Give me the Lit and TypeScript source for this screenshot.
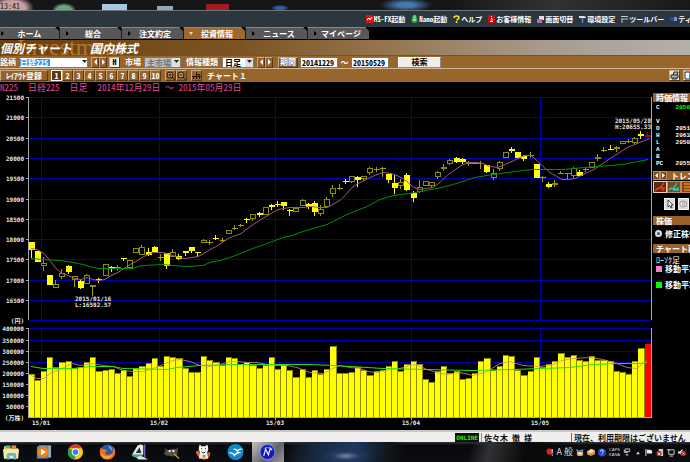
import { LitElement, html, svg, css } from 'lit';
import { customElement } from 'lit/decorators.js';
import { classMap } from 'lit/directives/class-map.js';

// all chart data is in thirds of a pixel
// high, body top, body bottom, low, filled
const CANDLES: number[][] = [
  [457, 457, 479, 507, 1], [484, 484, 515, 515, 1], [502, 520, 528, 543, 0], [555, 555, 584, 584, 1],
  [571, 583, 593, 593, 0], [538, 548, 561, 567, 0], [524, 528, 545, 551, 1], [557, 557, 571, 590, 0],
  [566, 573, 594, 597, 1], [551, 556, 583, 583, 0], [586, 586, 592, 618, 0], [563, 567, 570, 580, 1],
  [523, 523, 559, 559, 0], [528, 531, 534, 545, 1], [524, 530, 533, 540, 0], [503, 505, 508, 513, 1],
  [511, 511, 535, 535, 0], [475, 475, 490, 490, 0], [466, 472, 494, 494, 0], [475, 486, 494, 499, 1],
  [468, 472, 487, 487, 1], [492, 500, 503, 513, 0], [489, 489, 528, 536, 1], [478, 486, 501, 501, 0],
  [492, 498, 507, 510, 1], [484, 484, 490, 497, 1], [470, 472, 482, 490, 1], [487, 487, 490, 501, 1],
  [446, 450, 460, 460, 0], [450, 456, 459, 465, 0], [436, 444, 447, 450, 1], [444, 450, 453, 460, 0],
  [421, 421, 433, 433, 0], [406, 414, 417, 420, 0], [402, 406, 406, 411, 0], [384, 387, 391, 399, 1],
  [373, 373, 388, 394, 0], [366, 370, 375, 382, 1], [352, 352, 376, 376, 0], [341, 346, 350, 360, 1],
  [333, 342, 346, 352, 1], [336, 336, 348, 360, 1], [356, 360, 363, 377, 1], [350, 355, 367, 367, 0],
  [328, 331, 349, 349, 0], [338, 341, 351, 358, 1], [334, 339, 366, 378, 1], [345, 358, 373, 377, 0],
  [322, 326, 352, 352, 0], [285, 295, 311, 320, 0], [283, 295, 295, 299, 0], [266, 272, 275, 281, 1],
  [257, 259, 275, 278, 0], [257, 262, 270, 290, 1], [257, 257, 266, 274, 0], [230, 235, 250, 255, 0],
  [231, 238, 238, 247, 0], [230, 235, 235, 260, 0], [249, 251, 269, 278, 1], [254, 279, 293, 313, 1],
  [268, 277, 289, 298, 0], [250, 254, 300, 302, 1], [302, 308, 323, 335, 1], [271, 290, 307, 310, 0],
  [272, 272, 289, 289, 0], [277, 277, 289, 295, 0], [243, 247, 261, 266, 0], [222, 230, 237, 243, 0],
  [206, 211, 221, 226, 0], [201, 204, 217, 220, 1], [205, 207, 216, 222, 1], [214, 217, 221, 228, 0],
  [218, 218, 221, 221, 0], [214, 218, 218, 236, 0], [226, 226, 246, 248, 1], [238, 248, 265, 270, 0],
  [214, 216, 237, 243, 0], [187, 187, 203, 203, 0], [172, 177, 182, 190, 1], [186, 186, 203, 203, 1],
  [194, 197, 206, 214, 1], [186, 195, 195, 203, 0], [222, 222, 263, 263, 1], [258, 260, 260, 277, 0],
  [275, 281, 290, 293, 1], [270, 280, 286, 290, 0], [243, 248, 248, 252, 0], [248, 250, 250, 268, 0],
  [230, 234, 257, 265, 0], [240, 245, 257, 259, 1], [234, 236, 240, 246, 0], [217, 217, 233, 233, 0],
  [192, 200, 206, 212, 0], [170, 181, 181, 187, 0], [165, 176, 178, 180, 1], [167, 171, 178, 187, 0],
  [154, 154, 163, 163, 0], [147, 152, 152, 158, 0], [142, 145, 158, 161, 0], [124, 132, 137, 147, 1],
  [126, 134, 141, 143, 0],
];

const VOLUMES = [
  162, 180, 154, 112, 142, 127, 124, 144, 142, 125, 110, 154, 149, 146, 159, 151, 169, 144, 138, 130,
  113, 138, 107, 110, 115, 143, 157, 157, 107, 120, 127, 136, 110, 115, 131, 125, 135, 144, 134, 110,
  148, 136, 149, 170, 148, 172, 149, 161, 146, 78, 159, 160, 155, 141, 149, 166, 152, 150, 138, 122,
  152, 133, 124, 132, 177, 186, 153, 138, 160, 154, 178, 175, 160, 123, 114, 150, 138, 105, 108, 149,
  166, 152, 111, 142, 133, 122, 99, 110, 105, 120, 122, 107, 120, 119, 123, 153, 155, 163, 122, 84, 72,
];

const PRICE_SHORT = [
  94, 475, 112, 478, 131, 488, 150, 511, 168, 535, 187, 549, 205, 556, 224, 563, 242, 566, 261, 561,
  279, 567, 298, 570, 316, 566, 334, 556, 353, 547, 371, 533, 390, 522, 408, 512, 427, 501, 445, 492,
  463, 487, 482, 486, 501, 490, 519, 496, 538, 501, 556, 503, 575, 500, 593, 497, 612, 488, 630, 476,
  649, 467, 664, 459, 685, 445, 723, 430, 760, 403, 797, 377, 834, 358, 852, 354, 871, 352, 908, 351,
  930, 349, 960, 352, 982, 350, 1000, 342, 1022, 328, 1037, 313, 1056, 292, 1074, 278, 1093, 269,
  1111, 260, 1130, 251, 1148, 247, 1172, 248, 1190, 255, 1210, 264, 1225, 277, 1241, 291, 1259, 296,
  1278, 294, 1300, 290, 1320, 277, 1345, 253, 1370, 235, 1390, 222, 1410, 216, 1430, 215, 1450, 219,
  1470, 227, 1495, 230, 1515, 223, 1535, 212, 1555, 203, 1575, 196, 1592, 195, 1610, 211, 1630, 229,
  1650, 246, 1670, 259, 1685, 267, 1705, 266, 1725, 263, 1750, 252, 1775, 240, 1800, 224, 1830, 205,
  1855, 188, 1880, 172, 1905, 161, 1925, 152, 1950, 143,
];

const PRICE_LONG = [
  94, 505, 130, 507, 180, 511, 220, 515, 250, 523, 280, 530, 300, 535, 400, 535, 415, 529, 430, 524,
  490, 523, 520, 525, 560, 528, 610, 524, 630, 517, 660, 509, 690, 501, 760, 473, 825, 449, 850, 440,
  875, 436, 910, 423, 980, 401, 1040, 373, 1100, 348, 1140, 328, 1170, 319, 1200, 312, 1230, 308,
  1260, 304, 1310, 295, 1360, 281, 1425, 260, 1480, 252, 1570, 240, 1595, 238, 1690, 238, 1720, 234,
  1790, 229, 1870, 222, 1900, 216, 1945, 206,
];

const VOLUME_SHORT = [
  94, 164, 112, 174, 131, 174, 150, 160, 187, 145, 215, 130, 240, 136, 279, 129, 310, 136, 340, 138,
  370, 150, 400, 154, 430, 153, 460, 144, 490, 132, 519, 121, 540, 118, 570, 124, 600, 136, 630, 138,
  660, 133, 690, 122, 710, 122, 745, 125, 770, 125, 800, 131, 830, 134, 860, 134, 890, 142, 930, 155,
  970, 160, 1000, 144, 1020, 136, 1050, 141, 1080, 143, 1100, 154, 1130, 155, 1170, 146, 1200, 145,
  1235, 131, 1255, 134, 1280, 147, 1310, 155, 1340, 161, 1380, 157, 1420, 165, 1460, 154, 1500, 130,
  1530, 123, 1570, 134, 1620, 139, 1660, 133, 1685, 120, 1720, 113, 1770, 112, 1810, 117, 1850, 128,
  1880, 140, 1910, 143, 1940, 121,
];

const VOLUME_LONG = [
  94, 139, 130, 145, 220, 143, 270, 138, 340, 139, 370, 145, 500, 146, 530, 140, 600, 136, 700, 132,
  800, 132, 870, 131, 930, 133, 1000, 136, 1100, 141, 1150, 145, 1280, 148, 1420, 151, 1540, 146,
  1710, 141, 1780, 132, 1850, 129, 1920, 129, 1940, 126,
];

const PRICE_GRID = [22, 82, 143, 205, 265, 326, 386, 448, 508, 570, 630, 691];
const PRICE_LABELS = ['21500', '21000', '20500', '20000', '19500', '19000', '18500', '18000', '17500', '17000', '16500', '(円)'];
const VOLUME_GRID = [25, 61, 92, 127, 160, 193, 226, 258, 292];
const VOLUME_LABELS = ['400000', '350000', '300000', '250000', '200000', '150000', '100000', '50000', '(万株)'];
const MONTHS: [number, string][] = [[124, '15/01'], [476, '15/02'], [826, '15/03'], [1232, '15/04'], [1621, '15/05']];

const px = (v: number) => Math.round(v / 3);
const priceY = (v: number) => px(v) - 5;
const volumeY = (v: number) => px(v) + 225;
const barX = (i: number) => Math.round(28.6 + i * 6.16);

function points(data: number[], y: (v: number) => number) {
  const out: string[] = [];
  for (let i = 0; i < data.length; i += 2) {
    out.push(`${px(data[i])},${y(data[i + 1]) + 0.5}`);
  }
  return out.join(' ');
}

@customElement('stock-chart')
export class StockChart extends LitElement {
  static styles = css`
    :host {
      display: block;
      min-width: 0;
      background: #000;
    }
    svg {
      display: block;
      width: 100%;
    }
    .grid {
      stroke: #0000b4;
      shape-rendering: crispEdges;
    }
    .axis {
      stroke: #a8a8a8;
      shape-rendering: crispEdges;
    }
    .candles, .bars {
      shape-rendering: crispEdges;
    }
    .up { fill: none; stroke: #8c8c00; }
    .down { fill: #ffff00; stroke: #ffff00; }
    .wick { stroke: #a0a000; }
    .last { fill: none; stroke: #b00000; }
    .short { fill: none; stroke: #9c5a84; }
    .long { fill: none; stroke: #009000; }
    .volume .short { stroke: #d08c78; stroke-opacity: 0.8; }
    .volume .long { stroke: #30e000; }
    .bar-edge { fill: #8c8c00; }
    .bar { fill: #ffff00; }
    .bar-last { fill: #ff0000; }
    text {
      fill: #e8e8e8;
      font: bold 6px "DejaVu Sans Mono", "Noto Sans CJK JP", monospace;
    }
    .end { text-anchor: end; }
    .middle { text-anchor: middle; }
  `;

  candle(c: number[], i: number) {
    const [high, top, bottom, low, filled] = c;
    const x = barX(i);
    const last = i === CANDLES.length - 1;
    const kind = last ? 'last' : filled ? 'down' : 'up';
    const wick = last ? 'last' : filled ? 'down' : 'wick';
    const t = priceY(top);
    const b = priceY(bottom);
    const h = Math.max(0, b - t - 1);
    return svg`
      <line class=${wick} x1=${x + 2.5} x2=${x + 2.5} y1=${priceY(high)} y2=${t}></line>
      <line class=${wick} x1=${x + 2.5} x2=${x + 2.5} y1=${b} y2=${priceY(low)}></line>
      ${h > 0
        ? svg`<rect class=${kind} x=${x + 0.5} y=${t + 0.5} width="5" height=${h}></rect>`
        : svg`<line class=${wick} x1=${x} x2=${x + 6} y1=${t + 0.5} y2=${t + 0.5}></line>`}
    `;
  }

  bar(v: number, i: number) {
    const x = barX(i);
    const y = volumeY(v);
    const h = volumeY(292) - y;
    if (i === VOLUMES.length - 1) {
      return svg`<rect class="bar-last" x=${x} y=${y} width="6" height=${h}></rect>`;
    }
    return svg`
      <rect class="bar-edge" x=${x} y=${y} width=${barX(i + 1) - x} height=${h}></rect>
      <rect class="bar" x=${x} y=${y + 1} width=${barX(i + 1) - x - 1} height=${h - 1}></rect>
    `;
  }

  render() {
    return html`
      <svg viewBox="0 0 652 335" role="img" aria-label="日経225 日足">
        <g class="grid">
          ${PRICE_GRID.map((y) => svg`<line x1="29" x2="651" y1=${priceY(y) + 0.5} y2=${priceY(y) + 0.5}></line>`)}
          ${VOLUME_GRID.map((y) => svg`<line x1="29" x2="651" y1=${volumeY(y) + 0.5} y2=${volumeY(y) + 0.5}></line>`)}
          ${MONTHS.map(([x]) => svg`
            <line x1=${px(x) + 0.5} x2=${px(x) + 0.5} y1="2" y2="225"></line>
            <line x1=${px(x) + 0.5} x2=${px(x) + 0.5} y1="233" y2="322"></line>
          `)}
        </g>
        <g class="candles">${CANDLES.map((c, i) => this.candle(c, i))}</g>
        <polyline class="short" points=${points(PRICE_SHORT, priceY)}></polyline>
        <polyline class="long" points=${points(PRICE_LONG, priceY)}></polyline>
        <g class="bars">${VOLUMES.map((v, i) => this.bar(v, i))}</g>
        <g class="volume">
          <polyline class="short" points=${points(VOLUME_SHORT, volumeY)}></polyline>
          <polyline class="long" points=${points(VOLUME_LONG, volumeY)}></polyline>
        </g>
        <g class="axis">
          <path d="M28.5 2V225M28.5 233V323M651.5 2V225M651.5 233V323M28 322.5H652"></path>
          ${PRICE_GRID.slice(0, 11).map((y) => svg`<line x1="26" x2="29" y1=${priceY(y) + 0.5} y2=${priceY(y) + 0.5}></line>`)}
          ${VOLUME_GRID.slice(0, 8).map((y) => svg`<line x1="26" x2="29" y1=${volumeY(y) + 0.5} y2=${volumeY(y) + 0.5}></line>`)}
          ${MONTHS.map(([x]) => svg`<line x1=${px(x) + 0.5} x2=${px(x) + 0.5} y1="322" y2="325"></line>`)}
        </g>
        ${PRICE_LABELS.map((t, i) => svg`<text class="end" x="24" y=${priceY(PRICE_GRID[i]) + 3}>${t}</text>`)}
        ${VOLUME_LABELS.map((t, i) => svg`<text class="end" x="24" y=${volumeY(VOLUME_GRID[i]) + 3}>${t}</text>`)}
        ${MONTHS.map(([x, t]) => svg`<text class="middle" x=${px(x)} y="330">${t}</text>`)}
        <text x="75" y="206">2015/01/16</text>
        <text x="75" y="212">L:16592.57</text>
        <text class="end" x="651" y="28">2015/05/28</text>
        <text class="end" x="651" y="34">H:20655.33</text>
      </svg>
    `;
  }
}

@customElement('quote-panel')
export class QuotePanel extends LitElement {
  static styles = css`
    :host {
      display: block;
      overflow: hidden;
      background: #000;
      color: #fff;
      font: bold 8px/9px "Noto Sans CJK JP", sans-serif;
      font-feature-settings: "hwid";
      white-space: nowrap;
    }
    h2 {
      display: flex;
      align-items: center;
      gap: 2px;
      margin: 0;
      height: 9px;
      padding-left: 3px;
      background: #98622a;
      font-size: 8px;
    }
    table {
      margin: 2px 0 4px;
      border-collapse: collapse;
      font: bold 6px/7px "Liberation Mono", monospace;
    }
    th, td {
      height: 7px;
      padding: 0 0 0 3px;
      text-align: left;
      line-height: 6px;
      font-weight: bold;
    }
    th { width: 17px; }
    .now { color: #00ff00; }
    td.diff { color: #ff0000; padding-left: 10px; }
    button {
      flex: none;
      padding: 0;
      border: 1px solid #c08a50;
      background: #7a4a18;
      color: #fff;
    }
    .step { display: flex; width: 7px; height: 9px; align-items: center; justify-content: center; }
    .trend { padding-left: 0; gap: 0; }
    .trend span { margin-left: 4px; }
    .tools {
      display: flex;
      margin: 1px 0 5px;
    }
    .tools button { width: 14px; height: 12px; }
    .tools .on { border-color: #f0d0b0; background: #5c2a10; }
    .pointer {
      display: flex;
      gap: 3px;
      padding: 0 0 6px 11px;
    }
    .pointer button { width: 11px; height: 12px; background: #d8d8d8; border-color: #f4f4f4; }
    svg { display: block; width: 100%; height: 100%; }
    .adjust {
      display: flex;
      align-items: center;
      gap: 3px;
      padding: 4px 0 6px 2px;
    }
    input {
      appearance: none;
      flex: none;
      width: 7px;
      height: 7px;
      margin: 0;
      border: 2px solid #ddd;
      border-radius: 50%;
      background: #555;
    }
    .kind { margin: 2px 0 0 3px; font-weight: normal; }
    ul { margin: 0; padding: 0 0 0 3px; list-style: none; }
    li { display: flex; align-items: center; gap: 3px; height: 9px; margin-bottom: 7px; }
    .swatch { flex: none; width: 6px; height: 6px; }
    .pink { background: #f080c8; }
    .green { background: #00ff00; }
  `;

  render() {
    const rows = [['V', ''], ['O', '2051'], ['H', '2063'], ['L', '2050'], ['A', ''], ['B', ''], ['PC', '2055']];
    return html`
      <h2>時価情報</h2>
      <table>
        <tr><th>C</th><td class="now">2056</td></tr>
        <tr><th></th><td class="diff">↑</td></tr>
        ${rows.map(([k, v]) => html`<tr><th>${k}</th><td>${v}</td></tr>`)}
      </table>
      <h2 class="trend">
        <button class="step" aria-label="前へ"><svg viewBox="0 0 5 7"><path d="M4 1v5L1 3.5z" fill="#fff"/></svg></button>
        <button class="step" aria-label="次へ"><svg viewBox="0 0 5 7"><path d="M1 1v5l3-2.500z" fill="#fff"/></svg></button>
        <span>トレンド</span>
      </h2>
      <div class="tools">
        <button class="on" aria-label="トレンドライン">
          <svg viewBox="0 0 12 10"><path d="M1 9l3-3 1 1 5-6M7 6h4M9 6v3" stroke="#f04020" stroke-width="1.300" fill="none"/></svg>
        </button>
        <button aria-label="平均線">
          <svg viewBox="0 0 12 10"><path d="M1 8l2-2 2 1 4-6M6 9V6l2 2 2-2v3" stroke="#20d8d8" stroke-width="1.300" fill="none"/></svg>
        </button>
        <button aria-label="横線">
          <svg viewBox="0 0 12 10"><path d="M2 2h9M2 5h9M2 8h9" stroke="#f08020" stroke-width="1.500"/></svg>
        </button>
      </div>
      <div class="pointer">
        <button aria-label="選択"><svg viewBox="0 0 9 10"><path d="M3 1v7l1.500-1.500L6 9l1-.5-1-2.500h2z" fill="#fff" stroke="#222" stroke-width=".8"/></svg></button>
        <button aria-label="消去"><svg viewBox="0 0 9 10"><path d="M1 3l4-1 3 2-1 3-4 1-2-2zM3 4h4M3 6h3" fill="#eee" stroke="#999"/></svg></button>
      </div>
      <h2>株価</h2>
      <label class="adjust"><input type="radio" checked>修正株価</label>
      <h2>チャート種</h2>
      <p class="kind">ﾛｰｿｸ足</p>
      <ul>
        <li><i class="swatch pink"></i>移動平均</li>
        <li><i class="swatch green"></i>移動平均</li>
      </ul>
    `;
  }
}

@customElement('task-bar')
export class TaskBar extends LitElement {
  static styles = css`
    :host {
      display: flex;
      align-items: center;
      height: 20px;
      overflow: hidden;
      color: #ddd;
      font: 9px/12px "Noto Sans CJK JP", sans-serif;
      background:
        radial-gradient(ellipse 26px 8px at 346px 14px, #7088a8 0, #24385c 50%, transparent 100%),
        linear-gradient(100deg, transparent 282px, #18283c 310px, #1c3860 350px, #101418 385px, transparent 400px),
        linear-gradient(105deg, transparent 455px, #303234 475px, #08090a 510px, transparent 560px),
        linear-gradient(#33383c, #08090b 3px, #0c0d10);
    }
    .apps { display: flex; }
    .apps button {
      width: 32px;
      height: 20px;
      padding: 1px 8px 1px 7px;
      border: 0;
      background: none;
    }
    .apps button:first-child { width: 28px; padding: 1px 8px 1px 3px; }
    .apps .active { background: linear-gradient(135deg, #c0c0c0, #606468 60%, #98999c); }
    svg { display: block; height: 18px; width: 17px; overflow: visible; }
    .tray {
      display: flex;
      align-items: center;
      gap: 3px;
      margin-left: auto;
      padding-right: 4px;
    }
    .tray svg { width: 8px; height: 9px; }
    .caps { font: 4px/5px "Liberation Sans", sans-serif; }
    .ime { font-size: 9px; }
  `;

  render() {
    return html`
      <div class="apps">
        <button aria-label="エクスプローラー"><svg viewBox="0 0 18 18">
          <path d="M1 3h6l1 2h8v11H1z" fill="#e8c868"/><path d="M3 2h5v3H3z" fill="#60b860"/><path d="M9 2h5v3H9z" fill="#e88050"/>
          <path d="M0 6h17l-1 10H1z" fill="#f8e8a8"/><path d="M4 17v-5q0-2 2-2h6q2 0 2 2v5h-3v-4H7v4z" fill="#58b8e0"/>
        </svg></button>
        <button aria-label="メディアプレーヤー"><svg viewBox="0 0 18 18">
          <rect x="4" y="2" width="13" height="13" fill="#88b0cc"/><rect x="2" y="3" width="12" height="13" fill="#508cb8"/>
          <circle cx="8.500" cy="9" r="6" fill="#f08018"/><path d="M6.500 5.500v7l5-3.500z" fill="#fff"/>
        </svg></button>
        <button aria-label="Chrome"><svg viewBox="0 0 18 18">
          <circle cx="9" cy="9" r="8" fill="#f4c820"/><path d="M9 9L2 5a8 8 0 0 0 6 12z" fill="#28a048"/>
          <path d="M2 5a8 8 0 0 1 14 0H9z" fill="#e03828"/>
          <circle cx="9" cy="9" r="4" fill="#fff"/><circle cx="9" cy="9" r="3" fill="#3880e0"/>
        </svg></button>
        <button aria-label="Firefox"><svg viewBox="0 0 18 18">
          <circle cx="9" cy="9" r="8" fill="#2058b0"/><path d="M10 2q5 1 4 7-1-3-3-4z" fill="#60a8e8"/>
          <path d="M2 4q1 2 4 2l3 2-3 2q3 4 8 0 2-3 0-7 4 3 3 8-2 6-8 6T1 11Q0 7 2 4z" fill="#f07018"/>
          <path d="M2 10q5 6 12 2-3 5-8 4-3-1-4-6z" fill="#f8a828"/>
        </svg></button>
        <button aria-label="ペイント"><svg viewBox="0 0 18 18">
          <path d="M1 12L7 2q4-2 6 0v10z" fill="#e8ecec"/><path d="M5 10l4-6 2 6z" fill="#203030"/><path d="M0 12h13l-3 4q-6 0-10-4z" fill="#48a8a8"/>
          <path d="M14.500 1v14" stroke="#7860b0" stroke-width="1.500"/><path d="M6 15q4-4 10 1l2 1H8z" fill="#d8e8e8"/>
        </svg></button>
        <button aria-label="GIMP"><svg viewBox="0 0 18 18">
          <path d="M1 5l5 2q4-2 8-1l2-2-1 8q-4 3-8 1-5 0-6-3l2-2z" fill="#585044"/>
          <circle cx="7" cy="8" r="1.200" fill="#fff"/><circle cx="11" cy="8" r="1.200" fill="#fff"/><path d="M12 11l5 5" stroke="#c88848" stroke-width="1.500"/>
        </svg></button>
        <button aria-label="キャラクター"><svg viewBox="0 0 18 18">
          <path d="M1 10q0-3 3-2l1 6 9 1 0-6q3 0 2 3-1 5-6 5t-9-7z" fill="#e87020"/>
          <path d="M5 1l2 2h4l2-2q2 5 0 8l1 7H4l1-7Q3 6 5 1z" fill="#f4f2ee"/>
          <path d="M7 5v1M11 5v1M7 9q2 2 4 0" stroke="#222" fill="none"/><path d="M8 12h3v3H8z" fill="#a09080"/>
        </svg></button>
        <button aria-label="OpenOffice"><svg viewBox="0 0 18 18">
          <circle cx="9" cy="9" r="8.500" fill="#1088d0"/>
          <path d="M6 6q3-2 5 1 3-3 6-1-4 0-6 3-2-3-5-3zM1 10q4-2 7 1 4-4 7-1-5 0-7 4-2-4-7-4z" fill="#fff"/>
        </svg></button>
        <button class="active" aria-label="マーケット"><svg viewBox="0 0 18 18">
          <circle cx="9" cy="9" r="8" fill="#1418b8" stroke="#9098e0"/><path d="M4 6q5-5 10 0-5-2-10 0z" fill="#6078f0"/>
          <path d="M5 13l2-7 3 6 2-7 2 2" fill="none" stroke="#e8e8ff" stroke-width="1.300"/>
        </svg></button>
      </div>
      <div class="tray">
        <svg viewBox="0 0 9 10"><circle cx="4" cy="4" r="3.500" fill="#e02018"/><path d="M7 1v5M7 7v2" stroke="#eee"/></svg>
        <span class="ime">A 般</span>
        <svg viewBox="0 0 9 10"><path d="M1 4h7v4q-3 2-7 0z" fill="#e8a860"/><path d="M0 1l4 2 4-2v3H1z" fill="#58a0e8"/><path d="M3 5h3v2H3z" fill="#fff"/></svg>
        <svg viewBox="0 0 9 10"><path d="M0 4l5-3 4 2v4L4 9 0 7z" fill="#d89848"/><path d="M0 4l5-3 4 2-5 3z" fill="#f8d8a0"/></svg>
        <svg viewBox="0 0 9 10"><circle cx="4.500" cy="5" r="4.500" fill="#2040d0"/><path d="M3 4q0-2 1.500-2T6 4q0 1-1.500 2M4.500 7v1" stroke="#fff" fill="none"/></svg>
        <span class="caps">CAPS<br>KANA</span>
        <svg viewBox="0 0 8 10"><path d="M2 1h5v3H2zM1 2v3h4" fill="none" stroke="#ccc"/><path d="M2 7h4L4 9z" fill="#ccc"/></svg>
        <svg viewBox="0 0 8 10"><path d="M2 7l2-3 2 3z" fill="#ddd"/></svg>
        <svg viewBox="0 0 9 10"><path d="M1 1v8" stroke="#eee"/><path d="M2 2h4l2 1v3H2z" fill="#eee"/></svg>
        <svg viewBox="0 0 9 10"><path d="M3 1h5v8H3z" fill="#ccc"/><circle cx="3.500" cy="6" r="3" fill="#d82018"/><path d="M2 5l3 3M5 5L2 8" stroke="#fff"/></svg>
        <svg viewBox="0 0 9 10"><path d="M2 2h6v5H2zM3 9h4M0 2h3" fill="none" stroke="#ddd"/></svg>
        <svg viewBox="0 0 9 10"><path d="M0 4h2l3-3v8L2 6H0z" fill="#eee"/><circle cx="6" cy="6" r="3" fill="#e02018"/><path d="M5 5l2 2" stroke="#fff"/></svg>
      </div>
    `;
  }
}

@customElement('app-root')
export class AppRoot extends LitElement {
  static styles = css`
    :host {
      display: flex;
      flex-direction: column;
      min-height: 100vh;
      overflow: hidden;
      background: #000;
      color: #fff;
      font: bold 8px/12px "Noto Sans CJK JP", sans-serif;
      font-feature-settings: "hwid";
      white-space: nowrap;
    }
    button, input, select {
      box-sizing: border-box;
      flex: none;
      margin: 0;
      padding: 0;
      font: inherit;
      font-feature-settings: inherit;
    }
    a { color: inherit; text-decoration: none; }
    .desktop {
      height: 10px;
      color: #222;
      line-height: 11px;
      font-weight: normal;
      background:
        radial-gradient(ellipse 22px 12px at 12px 8px, #c8a0a0 60%, transparent),
        radial-gradient(ellipse 12px 7px at 64px 10px, #68a880 60%, transparent),
        linear-gradient(#a8c8dc, #a8c8dc) 102px 4px / 25px 6px no-repeat,
        linear-gradient(#90a8b8, #90a8b8) 157px 6px / 16px 4px no-repeat,
        linear-gradient(#a01c20, #a01c20) 206px 4px / 23px 6px no-repeat,
        radial-gradient(ellipse 9px 3px at 280px 8px, #3060a0 50%, transparent),
        radial-gradient(ellipse 26px 7px at 406px 5px, #4878b0 30%, transparent),
        linear-gradient(110deg, #141618 65%, #303236 80%, #16181a);
    }
    .menu {
      display: flex;
      align-items: center;
      gap: 6px;
      height: 17px;
      box-sizing: border-box;
      padding-left: 53%;
      border-top: 1px solid #707478;
      background: #2c363f;
      font-size: 7px;
    }
    .menu a { display: flex; align-items: center; gap: 1px; flex: none; }
    .menu svg { width: 7px; height: 8px; }
    .tabs { display: flex; height: 12px; margin-bottom: 1px; }
    .tab {
      box-sizing: border-box;
      display: flex;
      align-items: center;
      flex: none;
      width: 62px;
      padding-left: 5px;
      border-left: 1px solid #181818;
      border-top: 1px solid #888;
      background: #585858;
      line-height: 10px;
      clip-path: polygon(0 0, 58px 0, 100% 4px, 100% 100%, 0 100%);
    }
    .tab:first-child { width: 59px; padding-left: 0; border-left: 0; clip-path: polygon(0 0, 55px 0, 100% 4px, 100% 100%, 0 100%); }
    .tab span { flex: 1; padding-right: 4px; text-align: center; }
    .tab svg { width: 4px; height: 5px; }
    .tab.active { background: #a0682c; }
    .title {
      display: grid;
      align-items: center;
      height: 15px;
      overflow: hidden;
      background: linear-gradient(90deg, #6c400c, #7c5424 35%, #94744c 55%, #a89c90 80%, #b4b0ac);
    }
    .title > * { grid-area: 1 / 1; margin: 0; }
    .mark { padding-left: 17px; color: #b07830; font: 24px/13px "Liberation Serif", serif; }
    h1 { display: flex; gap: 18px; font-size: 12px; line-height: 15px; font-style: italic; }
    .bar {
      display: flex;
      align-items: center;
      height: 13px;
      background: #98652a;
    }
    .search { border-bottom: 1px solid #d0b898; border-top: 1px solid #80501c; height: 14px; box-sizing: border-box; }
    .field, .pick {
      height: 11px;
      border: 1px solid #777;
      border-radius: 0;
      background-color: #fff;
      color: #000;
      line-height: 9px;
    }
    .combo { display: flex; width: 69px; margin: 0 3px 0 3px; }
    .combo input {
      width: 62px;
      border-right: 0;
      color: #fff;
      background: linear-gradient(#3898f0, #3898f0) 0 1px / 30px 7px no-repeat #fff;
    }
    .combo button {
      width: 7px;
      height: 11px;
      border: 1px solid #777;
      border-left: 0;
      background: #fff;
    }
    .pick {
      appearance: none;
      padding-left: 2px;
      background: linear-gradient(#e0e0e0, #e0e0e0) right / 8px 9px no-repeat #fff;
    }
    .pick-box { display: grid; align-items: center; flex: none; }
    .pick-box > * { grid-area: 1 / 1; }
    .pick-box svg { justify-self: end; width: 5px; height: 4px; margin-right: 2px; pointer-events: none; }
    .market { width: 37px; margin: 0 5px 0 3px; }
    .market .pick { background-color: #c0c0c0; color: #777; opacity: 1; }
    .feet { width: 32px; margin: 0 3px 0 4px; }
    .date { width: 38px; padding: 0 1px; }
    .raised {
      height: 11px;
      border: 1px solid;
      border-color: #d0a878 #5c3810 #5c3810 #d0a878;
      background: #94622a;
      color: #fff;
      line-height: 8px;
    }
    .arrow { width: 8px; }
    .arrow svg, .combo svg { display: block; margin: 0 auto; width: 5px; height: 6px; }
    .key { width: 11px; margin: 0 5px 0 2px; background: #f0eeea; color: #000; }
    .period { width: 20px; margin: 0 2px 0 5px; background: #80501c; }
    .tilde { width: 13px; text-align: center; }
    .tilde, .wide { font-feature-settings: normal; }
    .go { width: 43px; margin-left: 9px; background: #f0eeea; color: #000; border-color: #fff #888 #888 #fff; }
    .save { width: 48px; margin-right: 3px; }
    .number { width: 11px; }
    .number.on { background: #5c3810; border-color: #fff; }
    .lens { width: 11px; }
    .zoom { margin-left: 4px; }
    .lens svg { display: block; width: 9px; height: 9px; }
    .name { margin-left: 5px; }
    .right { display: flex; gap: 3px; margin-left: auto; overflow: hidden; width: 21px; }
    .right .raised { background: #f0eeea; }
    h2 {
      display: flex;
      gap: 10px;
      margin: 0;
      height: 13px;
      color: #e04898;
      font-size: 9px;
      line-height: 12px;
      font-weight: normal;
    }
    main {
      display: grid;
      grid-template-columns: minmax(0, 1fr) 37px;
      column-gap: 1px;
      flex: 1;
    }
    quote-panel { margin-top: -2px; }
    .status {
      display: flex;
      align-items: center;
      height: 12px;
      box-sizing: border-box;
      border-top: 2px solid #c8c8c8;
      background: #f0eeec;
      color: #111;
      line-height: 9px;
    }
    .online {
      margin-left: auto;
      padding: 0 1px;
      background: #101010;
      color: #30f000;
      font: bold 6px/9px "DejaVu Sans Mono", monospace;
    }
    .user { box-sizing: border-box; width: 90px; margin-left: 2px; padding-left: 2px; border-left: 1px solid #888; }
    .limit { box-sizing: border-box; width: 119px; padding-left: 2px; border-left: 1px solid #666; }
  `;

  menu = [
    ['MS-FX起動', svg`<rect width="7" height="8" fill="#d81818"/><path d="M1 5l2-2 1 2 2-3" stroke="#fff" fill="none"/>`],
    ['Nano起動', svg`<ellipse cx="3.500" cy="5" rx="3" ry="3" fill="#30a850"/><circle cx="3.500" cy="2" r="2" fill="#70d088"/><path d="M2 5h3" stroke="#fff"/>`],
    ['ヘルプ', svg`<path d="M1 3q0-2 2.500-2T6 3q0 1-2.500 2M3.500 6v2" stroke="#f8e820" stroke-width="1.500" fill="none"/>`],
    ['お客様情報', svg`<rect width="7" height="8" fill="#c01010"/><path d="M3.500 1v1M3 3.500h1V6M2 6.500h3" stroke="#fff" fill="none"/>`],
    ['画面切替', svg`<rect x="2" y="1" width="5" height="4" fill="#e8d8e8"/><rect y="4" width="5" height="4" fill="#b070b0"/>`],
    ['環境設定', svg`<path d="M0 1h5l2 1v1H0z" fill="#e0e0e0"/><path d="M3.500 3v5" stroke="#5888c8" stroke-width="1.500"/>`],
    ['ツールバー', svg`<path d="M0 1.500h7M0 4h7M1 4v4" stroke="#c8c8c8" fill="none"/>`],
    ['ティッカー', svg`<path d="M0 2h7v4H0z" fill="#3840a8"/><path d="M4 3h3M4 5h3" stroke="#d0d0e0"/>`],
  ] as const;

  tabs = ['ホーム', '総合', '注文約定', '投資情報', 'ニュース', 'マイページ'];

  arrows() {
    return html`
      <button type="button" class="raised arrow" aria-label="前へ"><svg viewBox="0 0 5 6"><path d="M4 0v6L1 3z" fill="#fff"/></svg></button>
      <button type="button" class="raised arrow" aria-label="次へ"><svg viewBox="0 0 5 6"><path d="M1 0v6l3-3z" fill="#fff"/></svg></button>
    `;
  }

  render() {
    const down = html`<svg viewBox="0 0 5 4"><path d="M0 0h5L2.500 3z" fill="#222"/></svg>`;
    return html`
      <div class="desktop">13:41</div>
      <nav class="menu">
        ${this.menu.map(([text, icon]) => html`<a href="#"><svg viewBox="0 0 7 8">${icon}</svg>${text}</a>`)}
      </nav>
      <nav class="tabs">
        ${this.tabs.map((text, i) => html`
          <a href="#" class=${classMap({ tab: true, active: i === 3 })}>
            <svg viewBox="0 0 4 5">
              ${i === 3 ? svg`<path d="M0 1h4L2 4z" fill="#f0d8b0"/>` : svg`<path d="M1 0v5l3-2.500z" fill="#000"/>`}
            </svg>
            <span>${text}</span>
          </a>
        `)}
      </nav>
      <header class="title">
        <span class="mark" aria-hidden="true">Investment</span>
        <h1><span>個別チャート</span><span>国内株式</span></h1>
      </header>
      <form class="bar search" @submit=${(e: Event) => e.preventDefault()}>
        <label for="code">銘柄</label>
        <div class="combo">
          <input id="code" class="field" value="日経225">
          <button type="button" aria-label="銘柄一覧">${down}</button>
        </div>
        ${this.arrows()}
        <button type="button" class="raised key">H</button>
        <label for="market">市場</label>
        <div class="pick-box market"><select id="market" class="pick" disabled><option>主市場</option></select>${down}</div>
        <label for="feet">情報種類</label>
        <div class="pick-box feet"><select id="feet" class="pick"><option>日足</option></select>${down}</div>
        ${this.arrows()}
        <button type="button" class="raised period">期間</button>
        <input class="field date" aria-label="開始日" value="20141229">
        <span class="tilde">～</span>
        <input class="field date" aria-label="終了日" value="20150529">
        <button class="raised go">検索</button>
      </form>
      <div class="bar">
        <button class="raised save">ﾚｲｱｳﾄ登録</button>
        ${[1, 2, 3, 4, 5, 6, 7, 8, 9, 10].map((n) => html`
          <button class=${classMap({ raised: true, number: true, on: n === 1 })}>${n}</button>
        `)}
        <button class="raised lens zoom" aria-label="拡大"><svg viewBox="0 0 9 9"><circle cx="4" cy="4" r="3" fill="#b89870" stroke="#221808"/><path d="M6 6l3 3M2.500 4h3M4 2.500v3" stroke="#221808"/></svg></button>
        <button class="raised lens" aria-label="縮小"><svg viewBox="0 0 9 9"><circle cx="4" cy="4" r="3" fill="#b89870" stroke="#221808"/><path d="M6 6l3 3M2.500 4h3" stroke="#221808"/></svg></button>
        <button class="raised lens zoom" aria-label="表示"><svg viewBox="0 0 9 9"><path d="M0 5.500h9M1.500 8V5.500M4.500 8V3.500h3V8M4.500 3.500V1" stroke="#221808" fill="none"/></svg></button>
        <span class="name wide">チャート１</span>
        <div class="right">
          <button class="raised lens" aria-label="印刷"><svg viewBox="0 0 9 9"><path d="M1 4h7v3H1zM3 4l1-3h4L7 4M2 8h5" fill="#bbb" stroke="#222"/></svg></button>
          <button class="raised lens" aria-label="保存"><svg viewBox="0 0 9 9"><path d="M1 1h5v7H1z" fill="#fff" stroke="#222"/><path d="M5 3l4 2-4 3z" fill="#18a098"/></svg></button>
        </div>
      </div>
      <h2><span>N225</span><span>日経225</span><span>日足</span><span>2014年12月29日 <span class="wide">～</span> 2015年05月29日</span></h2>
      <main>
        <stock-chart></stock-chart>
        <quote-panel></quote-panel>
      </main>
      <footer class="status">
        <span class="online">ONLINE</span>
        <span class="user">佐々木　徹 様</span>
        <span class="limit">現在、利用期限はございません</span>
      </footer>
      <task-bar></task-bar>
    `;
  }
}
